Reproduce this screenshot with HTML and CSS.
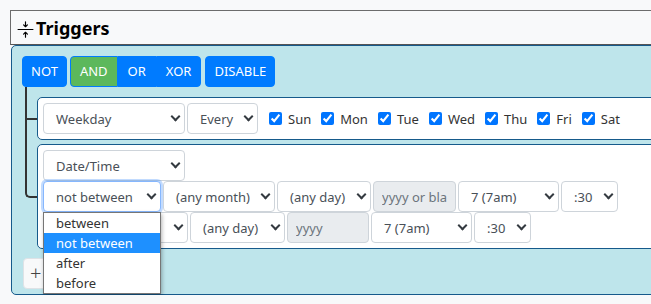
FILE: index.html
```html
<!DOCTYPE html>
<html>

<head>
    <meta name="viewport" content="width=device-width, initial-scale=1">
    <link rel="stylesheet" href="styles.css">
</head>

<body>

    <div class="page">
        <div class="card-head">
            <svg class="icon" viewBox="0 0 16 16" fill="none" stroke="#000" stroke-width="1.1" stroke-linecap="round" stroke-linejoin="round">
                <path d="M1 8h14"/>
                <path d="M8 0.8v4.6M6.2 3.6 8 5.4l1.8-1.8"/>
                <path d="M8 15.2v-4.6M6.2 12.4 8 10.6l1.8 1.8"/>
            </svg>
            Triggers
        </div>

        <div class="panel">
            <div class="ops">
                <button class="btn">NOT</button>
                <div class="btn-group">
                    <button class="btn btn-and">AND</button>
                    <button class="btn">OR</button>
                    <button class="btn">XOR</button>
                </div>
                <button class="btn">DISABLE</button>
            </div>

            <div class="children">
                <!-- weekday rule -->
                <div class="node">
                    <div class="row">
                        <div class="sel w-type">Weekday</div>
                        <div class="sel w-every">Every</div>
                        <div class="days">
                            <label class="day"><input type="checkbox" checked>Sun</label>
                            <label class="day"><input type="checkbox" checked>Mon</label>
                            <label class="day"><input type="checkbox" checked>Tue</label>
                            <label class="day"><input type="checkbox" checked>Wed</label>
                            <label class="day"><input type="checkbox" checked>Thu</label>
                            <label class="day"><input type="checkbox" checked>Fri</label>
                            <label class="day"><input type="checkbox" checked>Sat</label>
                        </div>
                    </div>
                </div>

                <!-- date/time rule -->
                <div class="node">
                    <div class="row">
                        <div class="sel w-type">Date/Time</div>
                    </div>
                    <div class="row">
                        <div class="sel-wrap">
                            <div class="sel w-op focus">not between</div>
                            <ul class="dropdown">
                                <li>between</li>
                                <li class="hl">not between</li>
                                <li>after</li>
                                <li>before</li>
                            </ul>
                        </div>
                        <div class="sel w-month">(any month)</div>
                        <div class="sel w-day">(any day)</div>
                        <input class="inp w-year" placeholder="yyyy or blank" readonly>
                        <div class="sel w-hour">7 (7am)</div>
                        <div class="sel w-min">:30</div>
                    </div>
                    <div class="row">
                        <div class="sel w-month2"></div>
                        <div class="sel w-day2">(any day)</div>
                        <input class="inp w-year2" placeholder="yyyy" readonly>
                        <div class="sel w-hour">7 (7am)</div>
                        <div class="sel w-min">:30</div>
                    </div>
                </div>
            </div>

            <button class="btn-add">+</button>
        </div>
    </div>

</body>

</html>
```

FILE: styles.css
```css
body {
    margin: 0;
    background-color: #f8f9fa;
    font-family: "Noto Sans", "Open Sans", sans-serif;
    font-size: 13px;
    color: #212529;
    overflow: hidden;
}

.page {
    width: 720px;
    padding: 10px 0 0 10px;
}

/* Header bar with the collapse icon */
.card-head {
    display: flex;
    align-items: center;
    height: 33px;
    padding-left: 6px;
    border: 1px solid #6c6c6c;
    border-bottom-color: #555;
    font-size: 18px;
    font-weight: bold;
    color: #000;
}

.icon {
    width: 17px;
    height: 17px;
    margin: 3px 2px 0 0;
}

/* Blue trigger panel */
.panel {
    margin-left: 1px;
    padding: 10px 10px 5px 10px;
    background-color: #bee5eb;
    border: 1px solid #165a8b;
    border-radius: 5px;
}

.ops {
    display: flex;
    gap: 3px;
}

.btn {
    font-family: inherit;
    font-size: 13px;
    line-height: 21px;
    padding: 4px 8px;
    color: #fff;
    background-color: #007bff;
    border: 1px solid #007bff;
    border-radius: 4px;
}

.ops > .btn:last-child {
    margin-left: 1px;
}

.btn-group {
    display: flex;
}

.btn-group .btn {
    padding: 4px 9px;
    border-radius: 0;
}

.btn-group .btn:first-child {
    border-radius: 4px 0 0 4px;
}

.btn-group .btn:last-child {
    border-radius: 0 4px 4px 0;
}

.btn-and {
    background-color: #5cb85c;
}

/* Tree of rules */
.children {
    display: flex;
    flex-direction: column;
    gap: 4px;
    margin-left: 15px;
    padding-top: 10px;
}

.node {
    position: relative;
    padding: 5px;
    background-color: #fff;
    border: 1px solid #165a8b;
    border-radius: 5px;
}

.node::before {
    content: "";
    position: absolute;
    left: -13px;
    top: -11px;
    width: 10px;
    height: calc(50% + 10px);
    border-left: 2px solid #333;
    border-bottom: 2px solid #333;
}

.node:not(:last-child)::after {
    content: "";
    position: absolute;
    left: -13px;
    top: 50%;
    bottom: -8px;
    border-left: 2px solid #333;
}

.node:last-child::before {
    border-bottom-left-radius: 5px;
}

.row {
    display: flex;
    align-items: center;
    gap: 2px;
}

/* Select boxes */
.sel {
    display: flex;
    align-items: center;
    justify-content: space-between;
    box-sizing: border-box;
    height: 31px;
    padding: 0 5px 0 12px;
    color: #495057;
    background-color: #fff;
    border: 1px solid #ced4da;
    border-radius: 4px;
    white-space: nowrap;
}

.sel::after {
    content: "";
    margin-left: auto;
    width: 5px;
    height: 5px;
    border-right: 2px solid #343a40;
    border-bottom: 2px solid #343a40;
    transform: translateY(-2px) rotate(45deg);
}

.sel.focus {
    border-color: #86b7fe;
    box-shadow: 0 0 0 2px rgba(13, 110, 253, 0.25);
}

.sel-wrap {
    position: relative;
    display: flex;
}

.inp {
    box-sizing: border-box;
    height: 31px;
    padding: 0 8px;
    font-family: inherit;
    font-size: 13px;
    background-color: #e9ecef;
    border: 1px solid #ced4da;
    border-radius: 4px;
}

.inp::placeholder {
    color: #6c757d;
}

.w-type { width: 142px; }
.w-every { width: 71px; }
.w-op { width: 118px; }
.w-month { width: 112px; }
.w-day { width: 94px; }
.w-year { width: 83px; }
.w-hour { width: 101px; }
.w-min { width: 57px; }
.w-month2 { width: 145px; }
.w-day2 { width: 95px; }
.w-year2 { width: 82px; }

/* Weekday checkboxes */
.days {
    display: flex;
    gap: 10px;
    margin-left: 9px;
}

.day {
    display: flex;
    align-items: center;
    color: #333;
}

.day input {
    width: 13px;
    height: 13px;
    margin: 0 6px 0 0;
}

/* Open option list */
.dropdown {
    position: absolute;
    top: 100%;
    left: 0;
    z-index: 10;
    box-sizing: border-box;
    width: 118px;
    margin: 0;
    padding: 0;
    list-style: none;
    background-color: #fff;
    border: 1px solid #767676;
    box-shadow: 1px 2px 4px rgba(0, 0, 0, 0.3);
}

.dropdown li {
    height: 20px;
    line-height: 20px;
    padding-left: 12px;
    color: #333;
}

.dropdown li.hl {
    background-color: #1e90ff;
    color: #fff;
}

.btn-add {
    height: 31px;
    width: 40px;
    margin: 9px 0 0 1px;
    padding: 0 0 2px 6px;
    text-align: left;
    font-family: inherit;
    font-size: 20px;
    font-weight: 300;
    color: #444;
    background-color: #f8f9fa;
    border: 1px solid #dee2e6;
    border-radius: 4px;
}
```
